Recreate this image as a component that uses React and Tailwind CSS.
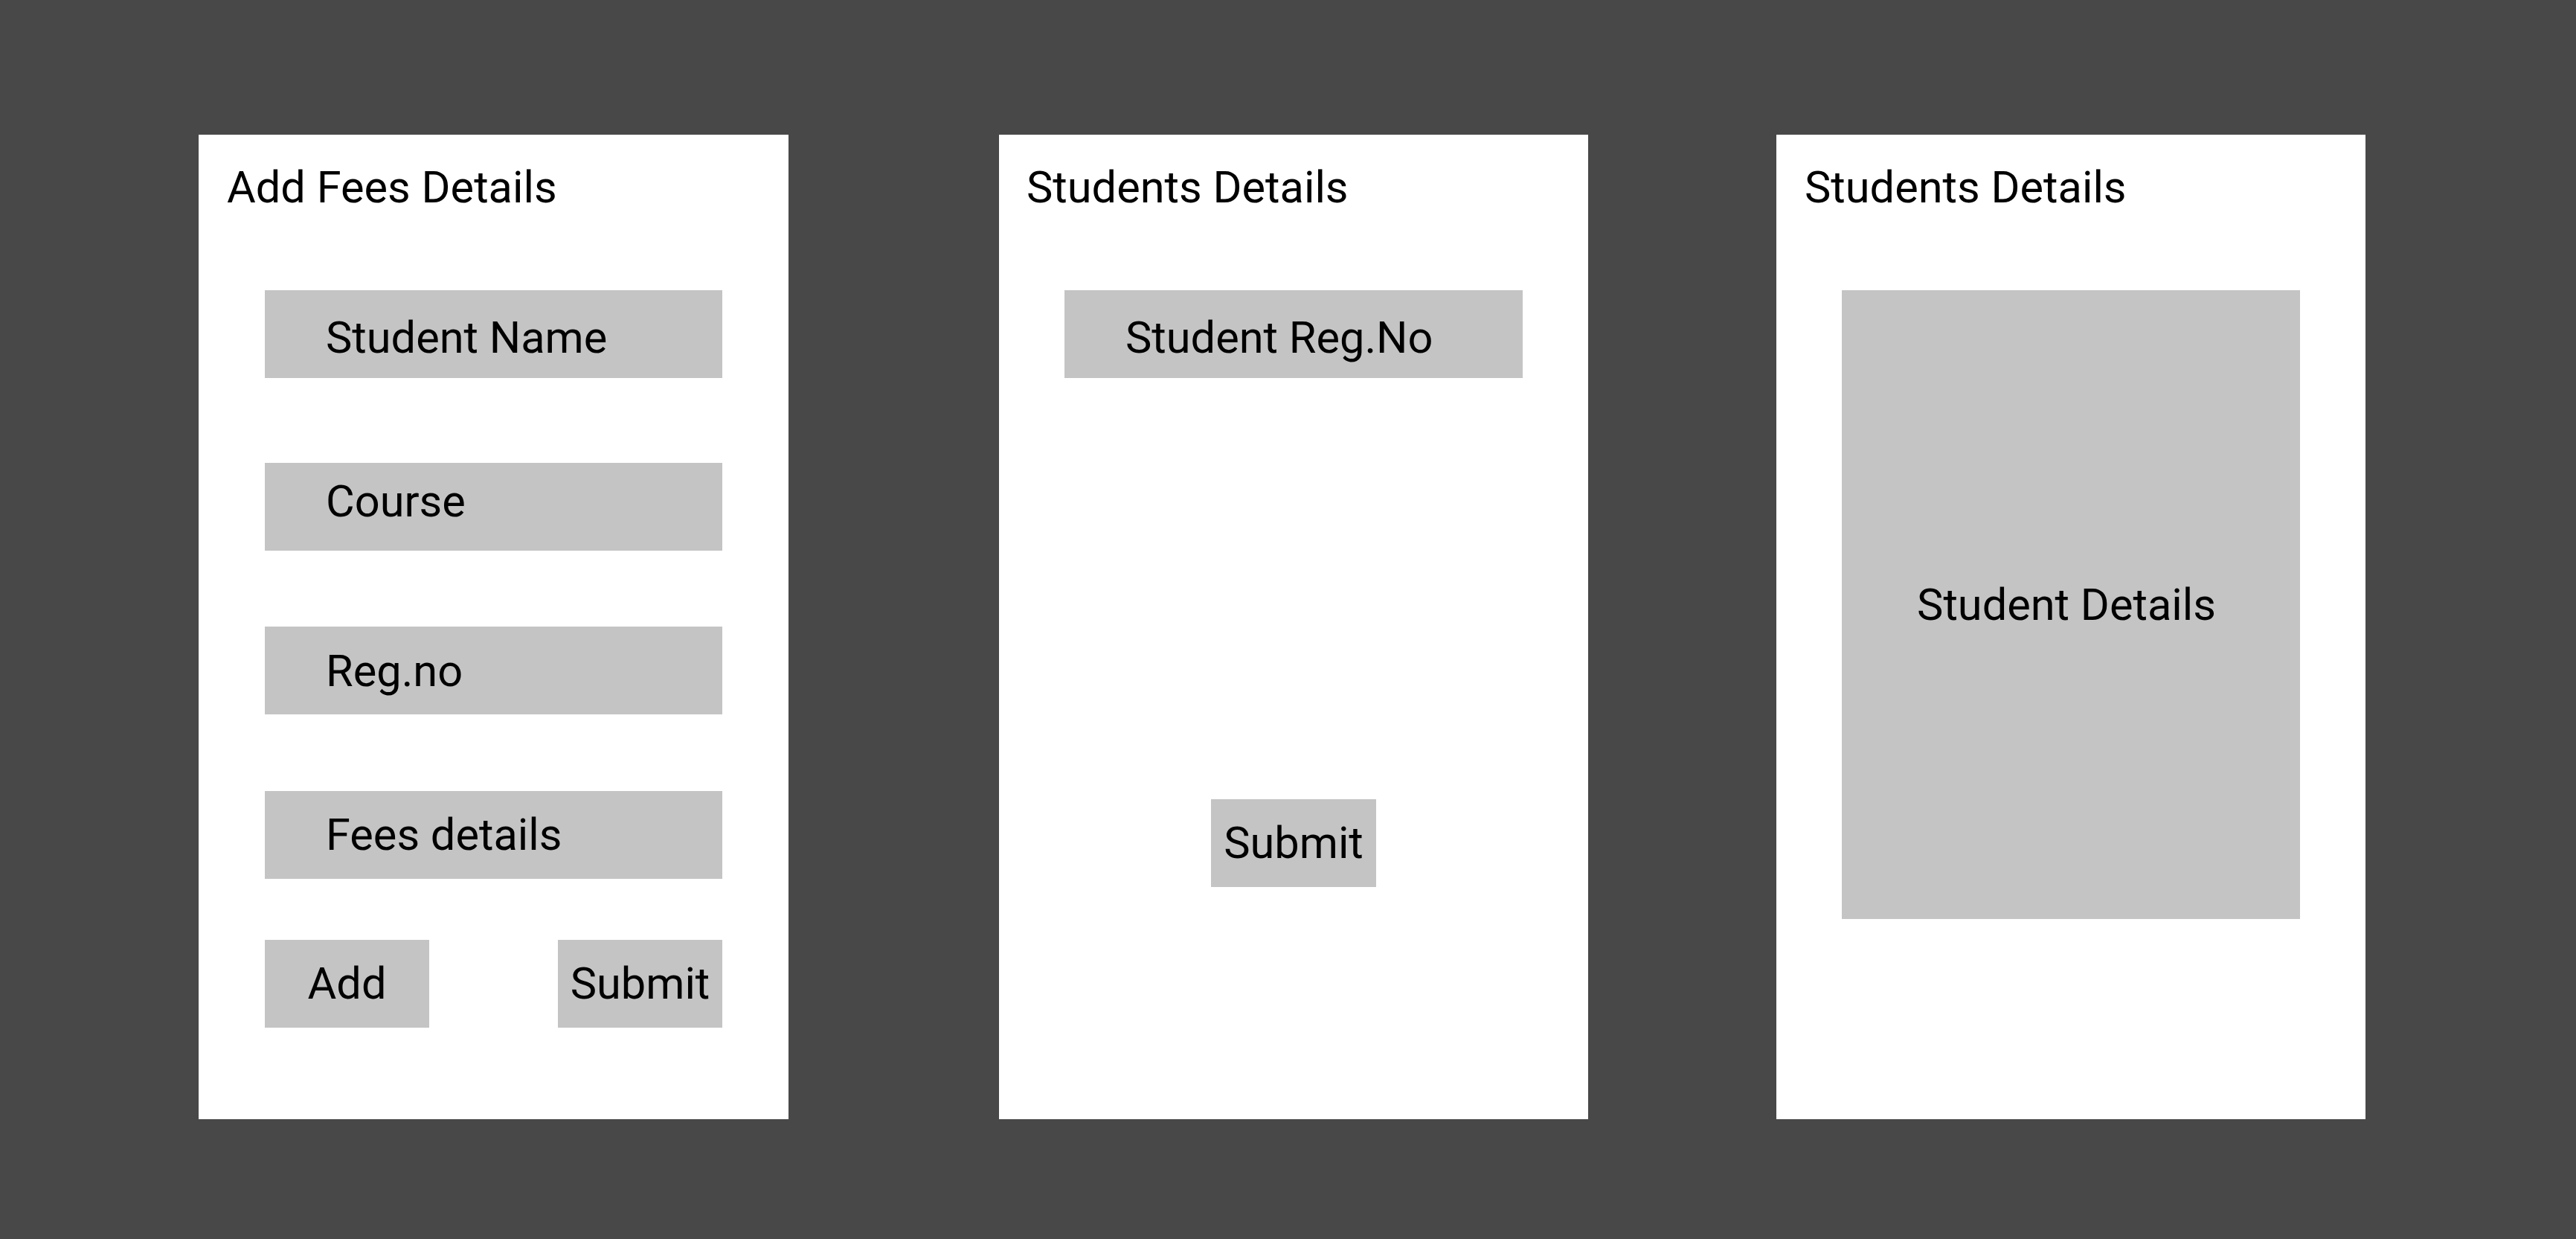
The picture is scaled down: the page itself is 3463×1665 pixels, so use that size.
export default function App() {
  return (
    <div className="w-[3463px] h-[1665px] bg-[#484848] flex items-start pt-[181px] pl-[267px] font-['Roboto',sans-serif] text-black text-[59.5px] leading-[70px]">
      {/* Add fees form */}
      <div className="w-[793px] h-[1323px] bg-white flex flex-col">
        <div className="mt-[36px] ml-[38px] h-[70px]">Add Fees Details</div>

        <div className="mt-[103px] ml-[89px] w-[615px] h-[118px] bg-[#c4c4c4] pl-[82px] pt-[29px]">Student Name</div>
        <div className="mt-[114px] ml-[89px] w-[615px] h-[118px] bg-[#c4c4c4] pl-[82px] pt-[17px]">Course</div>
        <div className="mt-[102px] ml-[89px] w-[615px] h-[118px] bg-[#c4c4c4] pl-[82px] pt-[25px]">Reg.no</div>
        <div className="mt-[103px] ml-[89px] w-[615px] h-[118px] bg-[#c4c4c4] pl-[82px] pt-[24px]">Fees details</div>

        <div className="mt-[82px] ml-[89px] w-[615px] flex justify-between">
          <div className="w-[221px] h-[118px] bg-[#c4c4c4] flex items-center justify-center">Add</div>
          <div className="w-[221px] h-[118px] bg-[#c4c4c4] flex items-center justify-center">Submit</div>
        </div>
      </div>

      {/* Search by reg no */}
      <div className="ml-[283px] w-[792px] h-[1323px] bg-white flex flex-col">
        <div className="mt-[36px] ml-[37px] h-[70px]">Students Details</div>
        <div className="mt-[103px] ml-[88px] w-[616px] h-[118px] bg-[#c4c4c4] pl-[82px] pt-[29px]">Student Reg.No</div>
        <div className="mt-[566px] mx-auto w-[222px] h-[118px] bg-[#c4c4c4] flex items-center justify-center">Submit</div>
      </div>

      {/* Result */}
      <div className="ml-[253px] w-[792px] h-[1323px] bg-white flex flex-col">
        <div className="mt-[36px] ml-[38px] h-[70px]">Students Details</div>
        <div className="mt-[103px] ml-[88px] w-[616px] h-[845px] bg-[#c4c4c4] flex items-center justify-center pr-[12px]">Student Details</div>
      </div>
    </div>
  );
}
